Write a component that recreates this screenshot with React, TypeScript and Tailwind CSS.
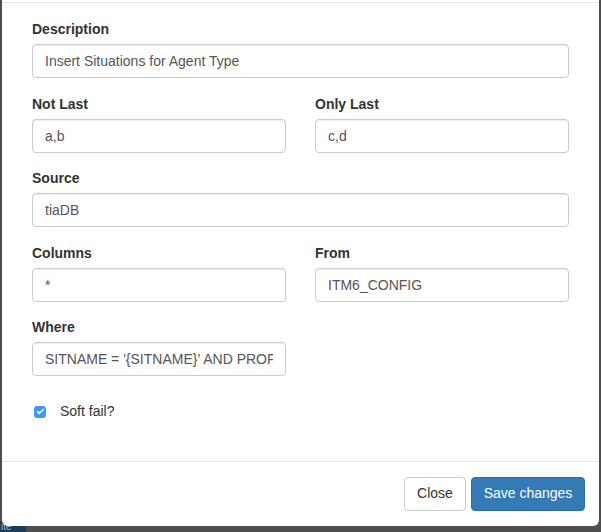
import { Check } from "lucide-react";

const inputCls =
  "h-[34px] w-full rounded-[4px] border border-[#ccc] bg-white px-[12px] text-[14px] text-[#555] shadow-[inset_0_1px_1px_rgba(0,0,0,0.075)] outline-none";

function Field({ label, value }: { label: string; value: string }) {
  return (
    <div className="mb-[15.5px]">
      <label className="mb-[5px] block text-[14px] font-bold leading-[20px] text-[#333]">
        {label}
      </label>
      <input className={inputCls} defaultValue={value} readOnly />
    </div>
  );
}

export default function App() {
  return (
    <div className="relative h-[532px] w-[601px] overflow-hidden bg-[#4e4e4e] font-['Liberation_Sans',Arial,sans-serif]">
      {/* page content peeking out under the backdrop */}
      <div className="absolute left-0 top-[521px] h-[11px] w-[26px] overflow-hidden bg-[#1d3a5b] pl-[1px] text-[10px] leading-[11px] text-[#9fb3c8]">
        ite
      </div>

      <div className="relative ml-[2px] w-[597px] rounded-b-[6px] bg-white">
        {/* header (scrolled off) */}
        <div className="h-[3px] border-b border-[#e5e5e5]" />

        {/* body */}
        <div className="px-[30px] pb-[39px] pt-[16px]">
          <Field label="Description" value="Insert Situations for Agent Type" />
          <div className="grid grid-cols-2 gap-x-[29px]">
            <Field label="Not Last" value="a,b" />
            <Field label="Only Last" value="c,d" />
          </div>
          <Field label="Source" value="tiaDB" />
          <div className="grid grid-cols-2 gap-x-[29px]">
            <Field label="Columns" value="*" />
            <Field label="From" value="ITM6_CONFIG" />
          </div>
          <div className="grid grid-cols-2 gap-x-[29px]">
            <Field label="Where" value="SITNAME = '{SITNAME}' AND PROFILE = '{PROFILE}'" />
          </div>
          <div className="mt-[10px] flex h-[20px] items-center">
            <span className="ml-[2px] flex h-[12px] w-[12px] items-center justify-center rounded-[3px] bg-[#3b99fc]">
              <Check className="h-[9px] w-[9px] text-white" strokeWidth={4} />
            </span>
            <span className="ml-[14px] text-[14px] text-[#333]">Soft fail?</span>
          </div>
        </div>

        {/* footer */}
        <div className="flex justify-end gap-[5px] border-t border-[#e5e5e5] px-[14px] py-[15px]">
          <button className="h-[34px] w-[62px] rounded-[4px] border border-[#ccc] bg-white text-[14px] text-[#333]">
            Close
          </button>
          <button className="h-[34px] w-[114px] rounded-[4px] border border-[#2e6da4] bg-[#337ab7] text-[14px] text-white">
            Save changes
          </button>
        </div>
      </div>
    </div>
  );
}
